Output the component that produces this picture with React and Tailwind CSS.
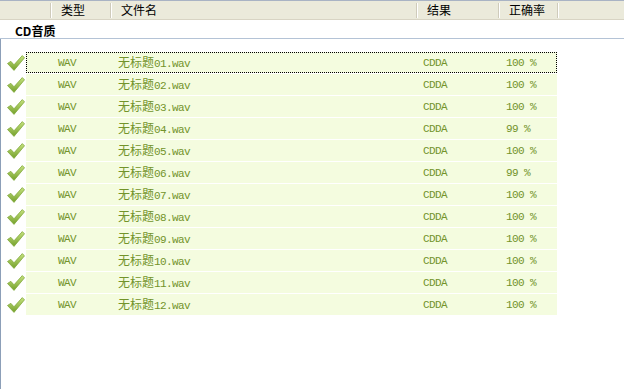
import React from "react";

const rows = [
  ["01", "100 %"],
  ["02", "100 %"],
  ["03", "100 %"],
  ["04", "99 %"],
  ["05", "100 %"],
  ["06", "99 %"],
  ["07", "100 %"],
  ["08", "100 %"],
  ["09", "100 %"],
  ["10", "100 %"],
  ["11", "100 %"],
  ["12", "100 %"],
];

const cjk = { fontFamily: '"Noto Sans CJK SC", "Noto Sans", sans-serif' };
const mono = { fontFamily: '"Liberation Mono", "DejaVu Sans Mono", monospace' };

function Check() {
  return (
    <svg width="18" height="16" viewBox="0 0 18 16">
      <defs>
        <linearGradient id="cg" x1="0" y1="0" x2="0" y2="1">
          <stop offset="0" stopColor="#c6e27e" />
          <stop offset="1" stopColor="#74a02c" />
        </linearGradient>
      </defs>
      <polygon
        points="0.5,8.5 3.8,6.3 7,9.8 15.3,0.6 17.5,2.8 7,15.4"
        fill="url(#cg)"
        stroke="#82a93c"
        strokeWidth="0.8"
        strokeLinejoin="round"
      />
    </svg>
  );
}

function Sep() {
  return (
    <div className="flex h-full items-center">
      <div className="flex h-[15px]">
        <div className="w-px bg-[#cfcbbb]" />
        <div className="w-px bg-white" />
      </div>
    </div>
  );
}

export default function App() {
  return (
    <div className="relative flex h-[389px] w-[624px] flex-col overflow-hidden bg-white text-black">
      {/* header */}
      <div className="flex h-[20px] shrink-0 border-t border-[#a9b3c4] border-b border-b-[#d8d4c4] bg-[#ebeadb] text-[12px] leading-none" style={cjk}>
        <div className="w-[50px]" />
        <Sep />
        <div className="flex w-[58px] items-center pl-[9px]">类型</div>
        <Sep />
        <div className="flex w-[304px] items-center pl-[9px]">文件名</div>
        <Sep />
        <div className="flex w-[80px] items-center pl-[9px]">结果</div>
        <Sep />
        <div className="flex w-[57px] items-center pl-[9px]">正确率</div>
        <Sep />
        <div className="flex-1" />
      </div>

      {/* group header */}
      <div className="flex h-[18px] shrink-0 items-center pl-[15px] pt-[4px] text-[12px] font-bold leading-none" style={cjk}>
        CD音质
      </div>
      <div className="h-px shrink-0 bg-[#b4c3d6]" />

      {/* list */}
      <div className="flex flex-1 flex-col border-l border-[#8c9fb8] pt-[13px]">
        {rows.map(([n, pct], i) => (
          <div key={n} className="flex h-[22px] shrink-0">
            <div className="flex w-[25px] items-center pb-[1px] pl-[6px]">
              <Check />
            </div>
            <div
              className={
                "flex h-[21px] w-[531px] items-center bg-[#f4fcdf] pt-[1px] text-[11px] leading-none text-[#72932a] " +
                (i === 0 ? "outline-1 outline-dotted outline-offset-[-1px] outline-black" : "")
              }
            >
              <div className="w-[84px] pl-[32px] tracking-[-0.6px]" style={mono}>WAV</div>
              <div className="flex w-[306px] items-baseline pl-[8px]">
                <span className="text-[12px]" style={cjk}>无标题</span>
                <span className="tracking-[-0.6px]" style={mono}>{n}.wav</span>
              </div>
              <div className="w-[82px] pl-[7px] tracking-[-0.6px]" style={mono}>CDDA</div>
              <div className="pl-[8px] tracking-[-0.6px]" style={mono}>{pct}</div>
            </div>
          </div>
        ))}
      </div>
    </div>
  );
}
